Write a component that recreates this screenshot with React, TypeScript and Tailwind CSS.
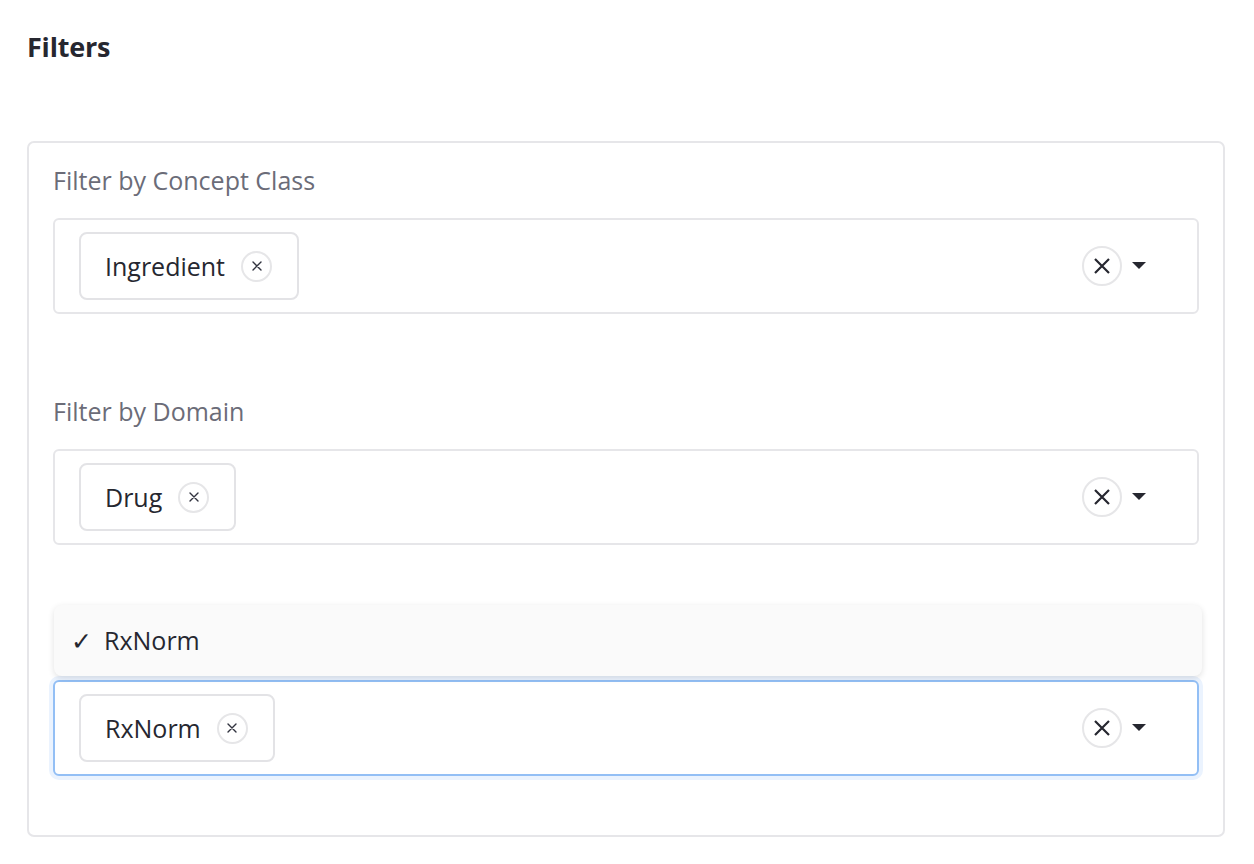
import React from "react";

const font = { fontFamily: "'Open Sans', 'Noto Sans', sans-serif" };

function SmallX() {
  return (
    <svg width="12" height="12" viewBox="0 0 12 12" fill="none">
      <path d="M2 2L10 10M10 2L2 10" stroke="#31333f" strokeWidth="1.4" strokeLinecap="round" />
    </svg>
  );
}

function Chip({ label }: { label: string }) {
  return (
    <div className="flex h-[68px] items-center rounded-[8px] border-2 border-[#e3e3e6] bg-white pl-[24px] pr-[25px]">
      <span className="text-[25px] leading-[34px] text-[#262730]">{label}</span>
      <span className="ml-[16px] flex h-[31px] w-[31px] items-center justify-center rounded-full border-2 border-[#e6e6e8]">
        <SmallX />
      </span>
    </div>
  );
}

function Select({ value, focused }: { value: string; focused?: boolean }) {
  return (
    <div
      className={
        "flex h-[96px] items-center rounded-[6px] border-2 bg-white pl-[24px] pr-[51px] " +
        (focused
          ? "border-[#93bff5] shadow-[0_0_0_4px_#ebf3fe]"
          : "border-[#e6e6e9]")
      }
    >
      <Chip label={value} />
      <div className="flex-1" />
      <span className="flex h-[40px] w-[40px] items-center justify-center rounded-full border-2 border-[#e6e6e8]">
        <svg width="18" height="18" viewBox="0 0 18 18" fill="none">
          <path d="M2 2L16 16M16 2L2 16" stroke="#262730" strokeWidth="2.2" />
        </svg>
      </span>
      <svg className="ml-[10px]" width="14" height="8" viewBox="0 0 14 8">
        <path d="M0 0H14L7 7Z" fill="#262730" />
      </svg>
    </div>
  );
}

export default function App() {
  return (
    <div className="min-h-[864px] w-full bg-white px-[27px] pr-[29px] pt-[27px]" style={font}>
      <h2 className="text-[27px] font-bold leading-[40px] tracking-[-0.2px] text-[#262730]">Filters</h2>
      <div className="mt-[74px] rounded-[7px] border-2 border-[#e6e6e9] px-[24px] pb-[59px] pt-[20px]">
        <div className="text-[25px] leading-[34px] text-[#6b6c78]">Filter by Concept Class</div>
        <div className="mt-[21px]">
          <Select value="Ingredient" />
        </div>
        <div className="mt-[80px] text-[25px] leading-[34px] text-[#6b6c78]">Filter by Domain</div>
        <div className="mt-[21px]">
          <Select value="Drug" />
        </div>
        <div className="relative mt-[80px]">
          <div className="h-[34px]" />
          <div className="absolute left-[1px] right-[-3px] top-[-20px] flex h-[71px] items-center rounded-[8px] bg-[#fafafa] pl-[17px] text-[25px] text-[#262730] shadow-[0_2px_6px_rgba(0,0,0,0.12)]">
            <span className="mr-[12px]">✓</span>
            <span>RxNorm</span>
          </div>
          <div className="mt-[21px]">
            <Select value="RxNorm" focused />
          </div>
        </div>
      </div>
    </div>
  );
}
